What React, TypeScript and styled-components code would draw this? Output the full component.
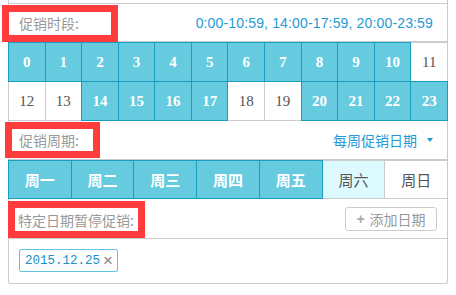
import React from 'react';
import styled, { createGlobalStyle } from 'styled-components';

const GlobalStyle = createGlobalStyle`
  html, body {
    margin: 0;
    padding: 0;
    background: #fff;
  }
  body {
    font-family: 'Noto Sans CJK SC', 'Liberation Sans', sans-serif;
    font-size: 14px;
  }
`;

const Page = styled.div`
  width: 456px;
  height: 295px;
  padding-left: 8px;
  box-sizing: border-box;
  overflow: hidden;
`;

const Panel = styled.div`
  width: 440px;
  box-sizing: border-box;
`;

const TopStub = styled.div`
  height: 3px;
  border: 1px solid #ccc;
  border-top: none;
`;

const Header = styled.div<{ $h: number }>`
  height: ${p => p.$h}px;
  box-sizing: border-box;
  display: flex;
  align-items: center;
  justify-content: space-between;
  border-left: 1px solid #ccc;
  border-right: 1px solid #ccc;
  border-bottom: 1px solid #ccc;
  padding-right: 14px;
`;

const Mark = styled.div<{ $left: number; $w: number; $h: number; $pad: number; $top?: number }>`
  margin-left: ${p => p.$left}px;
  margin-top: ${p => p.$top || 0}px;
  width: ${p => p.$w}px;
  height: ${p => p.$h}px;
  box-sizing: border-box;
  border: 7px solid #ff3b3b;
  background: #fff;
  padding-left: ${p => p.$pad}px;
  display: flex;
  align-items: center;
  color: #999;
  font-size: 14px;
  white-space: nowrap;
`;

const TimeText = styled.span`
  color: #1f9ad6;
  font-family: 'Liberation Sans', Arial, sans-serif;
  font-size: 14px;
  letter-spacing: 0.15px;
`;

const Grid = styled.div<{ $cols: number; $rowH: number }>`
  display: grid;
  grid-template-columns: repeat(${p => p.$cols}, 1fr);
  grid-auto-rows: ${p => p.$rowH}px;
  padding-right: 1px;
  padding-bottom: 1px;
`;

const Cell = styled.div<{ $on?: boolean; $soft?: boolean }>`
  position: relative;
  z-index: ${p => (p.$on ? 1 : 0)};
  margin: 0 -1px -1px 0;
  border: 1px solid ${p => (p.$on ? '#1a9ec0' : '#ccc')};
  background: ${p => (p.$on ? '#66cbdf' : p.$soft ? '#ddfbff' : '#fff')};
  color: ${p => (p.$on ? '#fff' : '#555')};
  display: flex;
  align-items: center;
  justify-content: center;
`;

const HourText = styled.span<{ $on?: boolean }>`
  font-family: 'Liberation Serif', 'DejaVu Serif', serif;
  font-weight: ${p => (p.$on ? 700 : 400)};
  font-size: 15px;
`;

const DayText = styled.span<{ $on?: boolean }>`
  font-family: 'Noto Sans CJK SC', sans-serif;
  font-weight: ${p => (p.$on ? 700 : 400)};
  font-size: 15px;
`;

const Dropdown = styled.div`
  display: flex;
  align-items: center;
  gap: 10px;
  color: #1f9ad6;
  font-size: 14px;
`;

const Caret = styled.span`
  width: 0;
  height: 0;
  border-left: 3.5px solid transparent;
  border-right: 3.5px solid transparent;
  border-top: 4px solid #1f9ad6;
`;

const AddButton = styled.button`
  width: 92px;
  height: 24px;
  margin-right: -4px;
  border: 1px solid #ccc;
  border-radius: 3px;
  background: #fff;
  color: #999;
  font-family: 'Noto Sans CJK SC', sans-serif;
  font-size: 14px;
  display: flex;
  align-items: center;
  justify-content: center;
  gap: 5px;
  padding: 0;
`;

const Plus = styled.span`
  font-family: 'Liberation Sans', sans-serif;
  font-weight: 700;
  color: #aaa;
  font-size: 14px;
`;

const TagArea = styled.div`
  height: 45px;
  box-sizing: border-box;
  border: 1px solid #ccc;
  border-top: none;
  border-radius: 0 0 3px 3px;
  display: flex;
  align-items: center;
  padding-left: 10px;
  padding-bottom: 1px;
`;

const Tag = styled.div`
  height: 23px;
  box-sizing: border-box;
  border: 1px solid #5bc6de;
  border-radius: 2px;
  padding: 0 4px 0 5px;
  display: flex;
  align-items: center;
  gap: 3px;
  color: #1a8fc3;
  font-family: 'Liberation Mono', 'DejaVu Sans Mono', monospace;
  font-size: 12.5px;
`;

const Close = styled.span`
  color: #888;
  font-family: 'Liberation Sans', sans-serif;
  font-size: 17px;
  font-weight: 300;
`;

const hoursOn = new Set([0, 1, 2, 3, 4, 5, 6, 7, 8, 9, 10, 14, 15, 16, 17, 20, 21, 22, 23]);
const days = [
  { name: '周一', on: true },
  { name: '周二', on: true },
  { name: '周三', on: true },
  { name: '周四', on: true },
  { name: '周五', on: true },
  { name: '周六', on: false, soft: true },
  { name: '周日', on: false },
];

const App: React.FC = () => (
  <Page>
    <GlobalStyle />
    <Panel>
      <TopStub />
      <Header $h={38}>
        <Mark $left={-7} $w={116} $h={37} $pad={10} $top={1}>促销时段:</Mark>
        <TimeText>0:00-10:59, 14:00-17:59, 20:00-23:59</TimeText>
      </Header>
      <Grid $cols={12} $rowH={39}>
        {Array.from({ length: 24 }, (_, h) => (
          <Cell key={h} $on={hoursOn.has(h)}>
            <HourText $on={hoursOn.has(h)}>{h}</HourText>
          </Cell>
        ))}
      </Grid>
      <Header $h={39}>
        <Mark $left={-4} $w={95} $h={36} $pad={7}>促销周期:</Mark>
        <Dropdown>
          每周促销日期
          <Caret />
        </Dropdown>
      </Header>
      <Grid $cols={7} $rowH={38}>
        {days.map(d => (
          <Cell key={d.name} $on={d.on} $soft={d.soft}>
            <DayText $on={d.on}>{d.name}</DayText>
          </Cell>
        ))}
      </Grid>
      <Header $h={40}>
        <Mark $left={-1} $w={137} $h={37} $pad={3} $top={2}>特定日期暂停促销:</Mark>
        <AddButton>
          <Plus>+</Plus>
          添加日期
        </AddButton>
      </Header>
      <TagArea>
        <Tag>
          2015.12.25
          <Close>×</Close>
        </Tag>
      </TagArea>
    </Panel>
  </Page>
);

export default App;
